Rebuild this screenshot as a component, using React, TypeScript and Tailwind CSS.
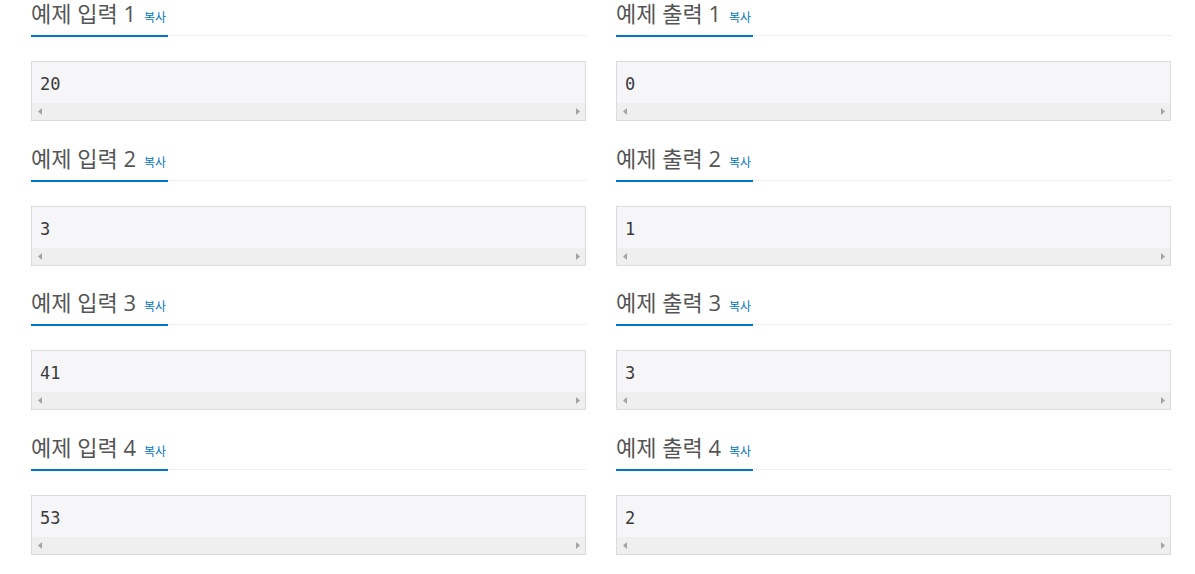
const samples = [
  { n: 1, input: '20', output: '0' },
  { n: 2, input: '3', output: '1' },
  { n: 3, input: '41', output: '3' },
  { n: 4, input: '53', output: '2' },
];

function Headline({ title }: { title: string }) {
  return (
    <div className="flex border-b border-dotted border-[#dddddd]">
      <h2 className="-mb-[2px] flex h-[37px] items-baseline border-b-2 border-[#0076c0] pr-[2px] text-[22px] leading-[26px] font-normal text-[#555555]">
        <span>{title}</span>
        <button type="button" className="ml-[8px] text-[12px] leading-[26px] text-[#0076c0]">
          복사
        </button>
      </h2>
    </div>
  );
}

function SampleBox({ data }: { data: string }) {
  return (
    <div className="mt-[25px] border border-[#dcdcdc] bg-[#f6f6f8]">
      <pre
        className="pt-[12px] pb-[9px] pl-[8px] text-[17px] leading-[20px] text-[#3a3a3a]"
        style={{ fontFamily: '"DejaVu Sans Mono", monospace' }}
      >
        {data}
      </pre>
      <div className="flex h-[17px] items-center justify-between bg-[#efefef] pl-[6px] pr-[5px]">
        <svg width="4" height="7" viewBox="0 0 4 7">
          <path d="M4 0 L0 3.5 L4 7 Z" fill="#a3a3a3" />
        </svg>
        <svg width="4" height="7" viewBox="0 0 4 7">
          <path d="M0 0 L4 3.5 L0 7 Z" fill="#a3a3a3" />
        </svg>
      </div>
    </div>
  );
}

function Section({ title, data }: { title: string; data: string }) {
  return (
    <section className="mb-[23.67px]">
      <Headline title={title} />
      <SampleBox data={data} />
    </section>
  );
}

export default function App() {
  return (
    <div
      className="min-h-[574px] bg-white pl-[31px]"
      style={{ fontFamily: '"Open Sans", "Noto Sans CJK KR", sans-serif' }}
    >
      {samples.map((s) => (
        <div key={s.n} className="grid grid-cols-[555px_555px] gap-x-[30px]">
          <Section title={`예제 입력 ${s.n}`} data={s.input} />
          <Section title={`예제 출력 ${s.n}`} data={s.output} />
        </div>
      ))}
    </div>
  );
}
